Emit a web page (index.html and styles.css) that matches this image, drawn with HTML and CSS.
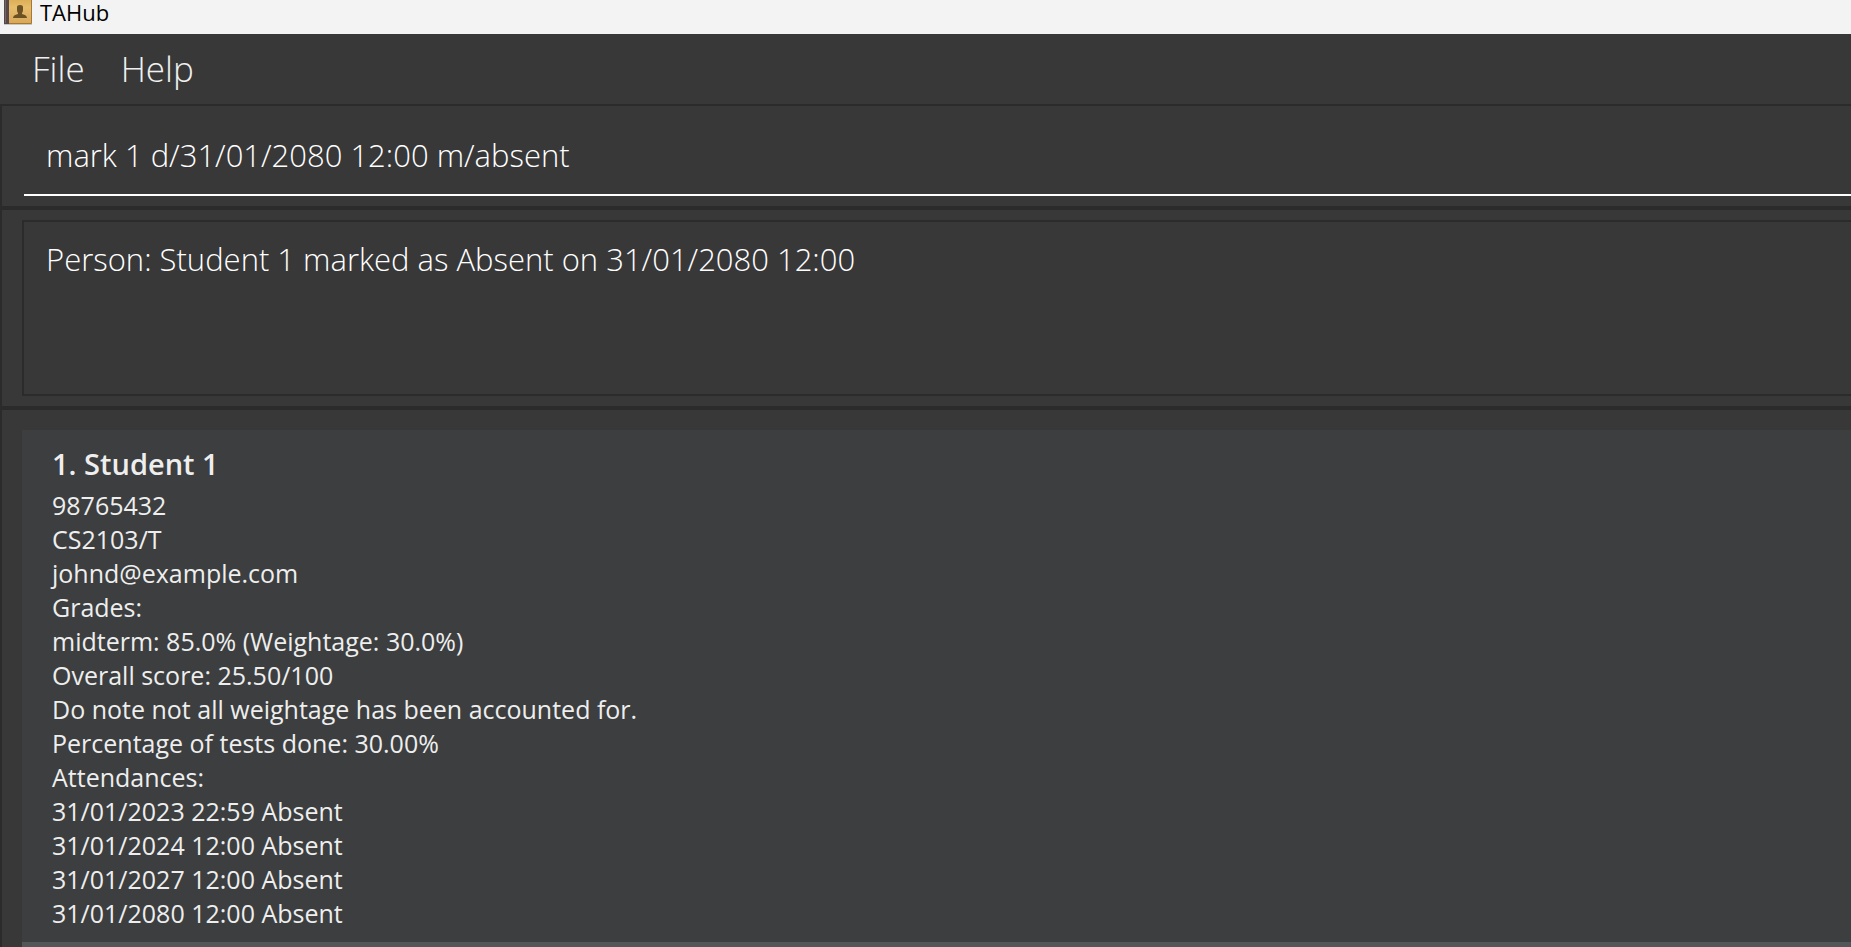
FILE: index.html
```html
<!DOCTYPE html>
<html lang="en">
<head>
<meta charset="utf-8">
<title>TAHub</title>
<link rel="stylesheet" href="styles.css">
</head>
<body>
<div class="window">
  <header class="title-bar">
    <svg class="app-icon" viewBox="0 0 32 26" aria-hidden="true">
      <defs>
        <linearGradient id="cover" x1="0" y1="0" x2="0" y2="1">
          <stop offset="0" stop-color="#d9a94f"/>
          <stop offset="0.4" stop-color="#e6bd6c"/>
          <stop offset="1" stop-color="#d9a95a"/>
        </linearGradient>
      </defs>
      <rect x="4" y="23" width="28" height="2" fill="#c9c5c0"/>
      <rect x="4" y="-3" width="28" height="27" rx="1" fill="#a87832"/>
      <rect x="9" y="-3" width="22" height="26" fill="url(#cover)"/>
      <rect x="4" y="-3" width="5" height="27" fill="#55474a"/>
      <rect x="5" y="-3" width="1" height="26" fill="#76686a"/>
      <path d="M17 7q0-2 3-2t3 2v3q0 2-1 3v1q5 1 5 4H13q0-3 5-4v-1q-1-1-1-3z" fill="#6b5225"/>
    </svg>
    <h1 class="app-name">TAHub</h1>
  </header>
  <nav class="menu-bar">
    <button class="menu" type="button">File</button>
    <button class="menu" type="button">Help</button>
  </nav>
  <main class="panes">
    <section class="pane command-pane">
      <input class="command" type="text" aria-label="Command" value="mark 1 d/31/01/2080 12:00 m/absent">
    </section>
    <section class="pane result-pane">
      <textarea class="result" aria-label="Result" readonly>Person: Student 1 marked as Absent on 31/01/2080 12:00</textarea>
    </section>
    <section class="pane list-pane">
      <article class="card">
        <h2 class="name">1. Student 1</h2>
        <p class="line">98765432</p>
        <p class="line">CS2103/T</p>
        <p class="line">johnd@example.com</p>
        <p class="line">Grades:</p>
        <p class="line">midterm: 85.0% (Weightage: 30.0%)</p>
        <p class="line">Overall score: 25.50/100</p>
        <p class="line">Do note not all weightage has been accounted for.</p>
        <p class="line">Percentage of tests done: 30.00%</p>
        <p class="line">Attendances:</p>
        <p class="line">31/01/2023 22:59 Absent</p>
        <p class="line">31/01/2024 12:00 Absent</p>
        <p class="line">31/01/2027 12:00 Absent</p>
        <p class="line">31/01/2080 12:00 Absent</p>
      </article>
      <article class="card card-alt"></article>
    </section>
  </main>
</div>
</body>
</html>
```
FILE: styles.css
```css
* {
  box-sizing: border-box;
}

body {
  margin: 0;
  background: #383838;
  font-family: "Open Sans", "Noto Sans", sans-serif;
}

.window {
  display: flex;
  flex-direction: column;
  height: 100vh;
  overflow: hidden;
}

.title-bar {
  display: flex;
  flex: none;
  align-items: flex-start;
  gap: 8px;
  height: 34px;
  background: #f3f3f3;
}

.app-icon {
  width: 32px;
  height: 26px;
}

.app-name {
  margin: 0;
  color: #000;
  font-size: 22px;
  font-weight: 400;
  line-height: 24px;
}

.menu-bar {
  display: flex;
  flex: none;
  gap: 36px;
  height: 70px;
  padding: 0 32px;
}

.menu {
  padding: 0;
  border: 0;
  background: none;
  color: #f0f0f0;
  font: 300 35px/70px "Open Sans", "Noto Sans", sans-serif;
}

.panes {
  display: flex;
  flex: 1;
  flex-direction: column;
  min-height: 0;
  border-top: 2px solid #2b2b2b;
  border-left: 2px solid #2b2b2b;
}

.pane {
  flex: none;
}

.command-pane {
  padding: 10px 0 10px 22px;
  border-bottom: 4px solid #2b2b2b;
}

.command,
.result {
  display: block;
  width: 100%;
  border-radius: 0;
  outline: 0;
  background: none;
  color: #fff;
  font: 300 31px/48px "Open Sans", "Noto Sans", sans-serif;
}

.command {
  height: 80px;
  padding: 4px 22px;
  border: 0;
  border-bottom: 2px solid #fff;
}

.result-pane {
  padding: 10px 0 10px 20px;
  border-bottom: 4px solid #2b2b2b;
}

.result {
  height: 176px;
  padding: 13px 22px;
  border: 2px solid #2b2b2b;
  border-right: 0;
  resize: none;
}

.list-pane {
  padding: 20px 0 0 20px;
}

.card {
  padding: 14px 30px 12px;
  background: #3c3e3f;
  color: #eee;
}

.card-alt {
  min-height: 60px;
  background: #515658;
}

.name {
  margin: 0 0 4px;
  font-size: 29px;
  font-weight: 600;
  line-height: 40px;
}

.line {
  margin: 0;
  font-size: 25px;
  line-height: 34px;
}
```
